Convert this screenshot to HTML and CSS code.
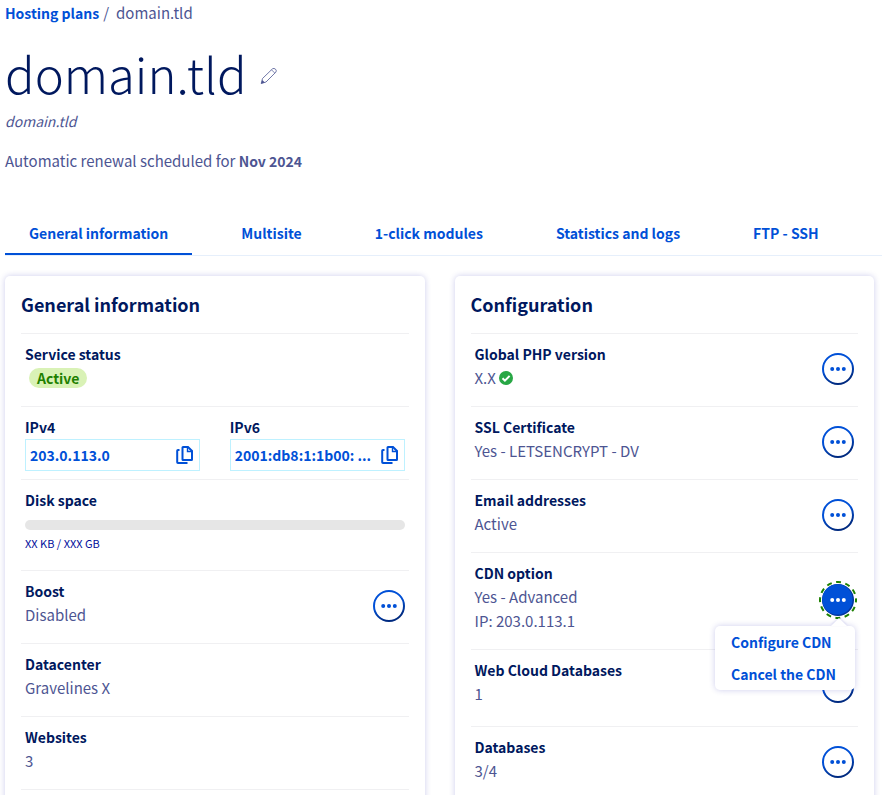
FILE: index.html
```html
<!DOCTYPE html>
<html lang="en">
<head>
<meta charset="utf-8">
<meta name="viewport" content="width=device-width, initial-scale=1">
<title>domain.tld - Hosting plans</title>
<link rel="stylesheet" href="styles.css">
</head>
<body>
<svg class="sprite" aria-hidden="true">
  <defs>
    <linearGradient id="ring" x1="0.3" y1="0" x2="0.7" y2="1"><stop offset="0.4" stop-color="#0050d7"/><stop offset="0.9" stop-color="#002a80"/></linearGradient>
  </defs>
  <symbol id="more" viewBox="0 0 32 32"><circle cx="16" cy="16" r="15" fill="none" stroke="url(#ring)" stroke-width="2"/><g fill="#0050d7"><circle cx="10.2" cy="16" r="2"/><circle cx="16" cy="16" r="2"/><circle cx="21.8" cy="16" r="2"/></g></symbol>
  <symbol id="copy" viewBox="0 0 18 20"><g fill="none" stroke="#0050d7" stroke-width="2"><path d="M8 2h5l4 4v8.500q0 .5-.5.5h-8.500q-.5 0-.5-.5v-12q0-.5.5-.5z"/><path d="M12.500 2v4.500H17" stroke-width="1.4"/><path d="M4.500 5H3q-.8 0-.8.8V17.200q0 .8.8.8h9.500"/></g></symbol>
</svg>
<header class="page-header">
  <nav class="breadcrumb" aria-label="Breadcrumb"><a href="#">Hosting plans</a><span>/</span><span class="current">domain.tld</span></nav>
  <div class="title">
    <h1>domain.tld</h1>
    <button class="edit" type="button" aria-label="Edit name">
      <svg width="18" height="18" viewBox="0 0 18 18"><path d="M2.500 11.500 12.500 1.800Q14 .8 15.500 2.200 17 3.800 15.800 5.200L6 15 1.200 16.500Z" fill="#fff" stroke="#4d5592" stroke-width=".8"/><path d="M11.500 2.800 14.800 6.100" stroke="#4d5592" stroke-width=".7"/><path d="m2.300 13-1.300 3.800L4.800 15.500Z" fill="#4d5592"/></svg>
    </button>
  </div>
  <p class="subtitle">domain.tld</p>
  <p class="renewal">Automatic renewal scheduled for <strong>Nov 2024</strong></p>
</header>
<nav class="tabs" aria-label="Sections">
  <a class="active" href="#" aria-current="page">General information</a>
  <a href="#">Multisite</a>
  <a href="#">1-click modules</a>
  <a href="#">Statistics and logs</a>
  <a href="#">FTP - SSH</a>
</nav>
<main class="cards">
  <section class="card">
    <h2>General information</h2>
    <dl>
      <div class="row"><div class="info"><dt>Service status</dt><dd><span class="badge">Active</span></dd></div></div>
      <div class="row ips">
        <div class="ip"><dt>IPv4</dt><dd><button class="clip" type="button"><span>203.0.113.0</span><svg width="18" height="20"><use href="#copy"/></svg></button></dd></div>
        <div class="ip"><dt>IPv6</dt><dd><button class="clip" type="button"><span>2001:db8:1:1b00: ...</span><svg width="18" height="20"><use href="#copy"/></svg></button></dd></div>
      </div>
      <div class="row"><div class="info disk"><dt>Disk space</dt><dd><div class="meter"></div><div class="usage">XX KB / XXX GB</div></dd></div></div>
      <div class="row"><div class="info"><dt>Boost</dt><dd>Disabled</dd></div><button class="more" type="button" aria-label="Boost actions"><svg width="32" height="32"><use href="#more"/></svg></button></div>
      <div class="row"><div class="info"><dt>Datacenter</dt><dd>Gravelines X</dd></div></div>
      <div class="row"><div class="info"><dt>Websites</dt><dd>3</dd></div></div>
      <div class="row end"></div>
    </dl>
  </section>
  <section class="card">
    <h2>Configuration</h2>
    <dl>
      <div class="row"><div class="info"><dt>Global PHP version</dt><dd class="version">X.X <svg width="14" height="14" viewBox="0 0 14 14"><circle cx="7" cy="7" r="7" fill="#28a745"/><path d="m3.500 7.200 2.400 2.400 4.700-4.700" fill="none" stroke="#fff" stroke-width="2"/></svg></dd></div><button class="more" type="button" aria-label="PHP actions"><svg width="32" height="32"><use href="#more"/></svg></button></div>
      <div class="row"><div class="info"><dt>SSL Certificate</dt><dd>Yes - LETSENCRYPT - DV</dd></div><button class="more" type="button" aria-label="SSL actions"><svg width="32" height="32"><use href="#more"/></svg></button></div>
      <div class="row"><div class="info"><dt>Email addresses</dt><dd>Active</dd></div><button class="more" type="button" aria-label="Email actions"><svg width="32" height="32"><use href="#more"/></svg></button></div>
      <div class="row"><div class="info"><dt>CDN option</dt><dd>Yes - Advanced</dd><dd>IP: 203.0.113.1</dd></div>
        <div class="menu-anchor">
          <button class="more open" type="button" aria-label="CDN actions" aria-expanded="true"><svg width="32" height="32" viewBox="0 0 32 32"><circle cx="16" cy="16" r="18" fill="none" stroke="#1e8000" stroke-width="2" stroke-dasharray="5 4.425" stroke-dashoffset="2.5"/><circle cx="16" cy="16" r="16" fill="#00349c"/><circle cx="15.4" cy="15.4" r="15.2" fill="#0050d7"/><g fill="#fff"><circle cx="10.2" cy="16" r="2"/><circle cx="16" cy="16" r="2"/><circle cx="21.8" cy="16" r="2"/></g></svg></button>
          <div class="menu"><a href="#">Configure CDN</a><a href="#">Cancel the CDN</a></div>
        </div>
      </div>
      <div class="row tall"><div class="info"><dt>Web Cloud Databases</dt><dd>1</dd></div><button class="more" type="button" aria-label="Web Cloud Databases actions"><svg width="32" height="32"><use href="#more"/></svg></button></div>
      <div class="row"><div class="info"><dt>Databases</dt><dd>3/4</dd></div><button class="more" type="button" aria-label="Database actions"><svg width="32" height="32"><use href="#more"/></svg></button></div>
    </dl>
  </section>
</main>
</body>
</html>
```
FILE: styles.css
```css
* { box-sizing: border-box; }
body {
  margin: 0;
  height: 100vh;
  overflow: hidden;
  background: #fff;
  color: #4d5592;
  font: 400 15px/24px "Noto Sans CJK JP", "Noto Sans CJK SC", "Open Sans", sans-serif;
}
h1, h2, p, dl, dd { margin: 0; }
a, strong, dt { font-size: 14px; font-weight: 700; }
a { color: #0050d7; text-decoration: none; }
button { padding: 0; border: 0; background: none; font: inherit; cursor: pointer; }
svg { display: block; flex: none; }
.sprite { position: absolute; width: 0; height: 0; }

.page-header { padding: 1px 5px 0; }
.breadcrumb { display: flex; gap: 4px; }
.breadcrumb .current { padding-left: 3px; }
.title { display: flex; align-items: center; gap: 13px; margin-top: 14px; }
h1 { color: #00185e; font-size: 49px; line-height: 68px; font-weight: 300; }
.edit { margin-top: 5px; }
.subtitle { margin-top: 2px; font-size: 14px; font-style: italic; }
.renewal { margin-top: 16px; }

.tabs {
  display: flex;
  gap: 25px;
  margin: 48px 0 0 5px;
  border-bottom: 1px solid #e6effb;
}
.tabs a { padding: 0 24px 8px; border-bottom: 2px solid transparent; white-space: nowrap; }
.tabs .active { border-color: #0050d7; }

.cards {
  display: grid;
  grid-template-columns: 1fr 1fr;
  gap: 30px;
  padding: 20px 8px 0 5px;
}
.card {
  min-width: 0;
  padding: 14px 16px 24px;
  border-radius: 5px;
  background: #fff;
  box-shadow: 0 0 6px rgba(0, 0, 160, 0.2);
}
h2 { margin-bottom: 15px; color: #00185e; font-size: 18px; line-height: 28px; font-weight: 700; }

.row {
  display: flex;
  align-items: center;
  justify-content: space-between;
  padding: 0 4px;
  border-top: 1px solid #f0f0f2;
}
.info { padding: 8px 0 16px; }
.tall .info { padding-bottom: 20px; }
.end { height: 40px; }
dt { color: #00185e; }
.badge {
  display: block;
  width: fit-content;
  margin: 2px 4px;
  padding: 0 8px;
  border-radius: 10px;
  background: #d9f2b6;
  color: #1e8000;
  font-size: 14px;
  font-weight: 700;
  line-height: 20px;
}
.ips { gap: 30px; padding-top: 8px; padding-bottom: 8px; }
.ip { flex: 1; min-width: 0; }
.clip {
  display: flex;
  align-items: center;
  justify-content: space-between;
  gap: 4px;
  width: 100%;
  height: 32px;
  padding: 0 6px 0 4px;
  border: 1px solid #bef1ff;
  color: #0050d7;
  font-size: 14px;
  font-weight: 700;
}
.clip span { overflow: hidden; text-overflow: ellipsis; white-space: nowrap; }
.disk { flex: 1; }
.meter { height: 10px; margin: 8px 0 5px; border-radius: 5px; background: #e6e6e6; }
.usage { color: #000e9c; font-size: 11px; line-height: 16px; padding-bottom: 3px; }
.version { display: flex; align-items: center; gap: 3px; }
.more { flex: none; width: 32px; height: 32px; margin-bottom: 2px; border-radius: 50%; }
.open { display: block; outline: none; }
.open svg { overflow: visible; }

.menu-anchor { position: relative; }
.menu {
  position: absolute;
  z-index: 1;
  top: 42px;
  right: -1px;
  padding: 0 19px 0 16px;
  border-radius: 5px;
  background: #fff;
  box-shadow: 0 0 6px rgba(0, 0, 160, 0.2);
}
.menu::before {
  content: "";
  position: absolute;
  top: -8px;
  right: 8px;
  border: 8px solid transparent;
  border-top: 0;
  border-bottom-color: #fff;
  filter: drop-shadow(0 -1px 1px rgba(0, 0, 160, 0.15));
}
.menu a { display: block; line-height: 32px; white-space: nowrap; }
```
